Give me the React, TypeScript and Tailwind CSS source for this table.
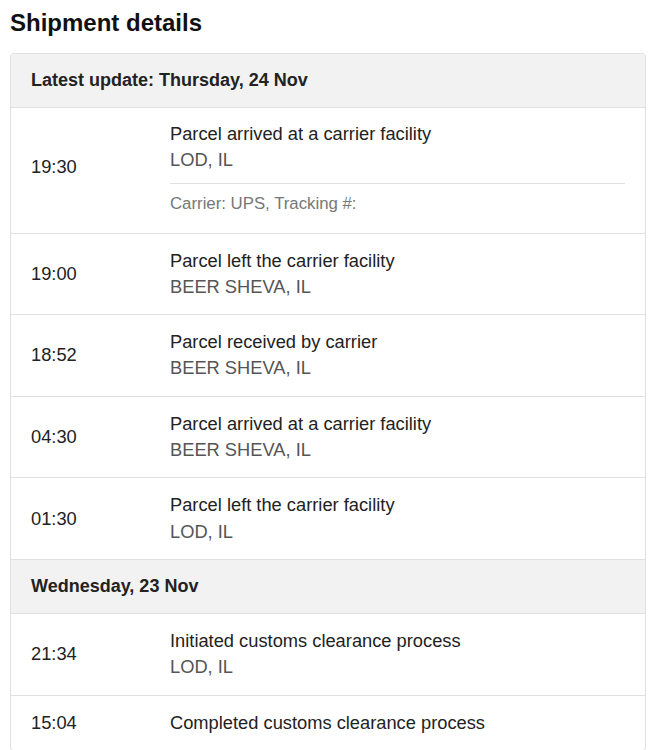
import React from "react";

type Event = {
  time: string;
  title: string;
  location?: string;
  carrier?: string;
};

type Day = {
  label: string;
  events: Event[];
};

const days: Day[] = [
  {
    label: "Latest update: Thursday, 24 Nov",
    events: [
      {
        time: "19:30",
        title: "Parcel arrived at a carrier facility",
        location: "LOD, IL",
        carrier: "Carrier: UPS, Tracking #:",
      },
      { time: "19:00", title: "Parcel left the carrier facility", location: "BEER SHEVA, IL" },
      { time: "18:52", title: "Parcel received by carrier", location: "BEER SHEVA, IL" },
      { time: "04:30", title: "Parcel arrived at a carrier facility", location: "BEER SHEVA, IL" },
      { time: "01:30", title: "Parcel left the carrier facility", location: "LOD, IL" },
    ],
  },
  {
    label: "Wednesday, 23 Nov",
    events: [
      { time: "21:34", title: "Initiated customs clearance process", location: "LOD, IL" },
      { time: "15:04", title: "Completed customs clearance process" },
    ],
  },
];

const Row = ({ event }: { event: Event }) => (
  <div
    className={`flex items-center border-t border-[#e0e0e0] pl-5 pr-5 ${
      event.carrier ? "pt-[13px] pb-[19px]" : "py-[14px]"
    }`}
  >
    <div className="w-[139px] shrink-0 text-[18.3px] leading-[26.3px] text-[#222]">
      {event.time}
    </div>
    <div className="flex-1">
      <div className="text-[18.3px] leading-[26.3px] text-[#222]">{event.title}</div>
      {event.location && (
        <div className="text-[18.3px] leading-[26.3px] text-[#555]">{event.location}</div>
      )}
      {event.carrier && (
        <div className="mt-[9px] border-t border-[#e0e0e0] pt-[10px] text-[16.8px] leading-[20px] text-[#777]">
          {event.carrier}
        </div>
      )}
    </div>
  </div>
);

export default function App() {
  return (
    <div
      className="min-h-screen bg-white px-[10px] pt-[8px]"
      style={{ fontFamily: '"Liberation Sans", Arial, sans-serif' }}
    >
      <h1 className="text-[24px] font-bold leading-[30px] text-[#111]">Shipment details</h1>
      <div className="mt-[15px] overflow-hidden rounded-[4px] border border-[#e0e0e0]">
        {days.map((day, i) => (
          <div key={i} className={i > 0 ? "border-t border-[#e0e0e0]" : ""}>
            <div className="bg-[#f2f2f2] px-5 py-[14px] text-[18px] font-bold leading-[25px] text-[#222]">
              {day.label}
            </div>
            {day.events.map((event, j) => (
              <Row key={j} event={event} />
            ))}
          </div>
        ))}
      </div>
    </div>
  );
}
